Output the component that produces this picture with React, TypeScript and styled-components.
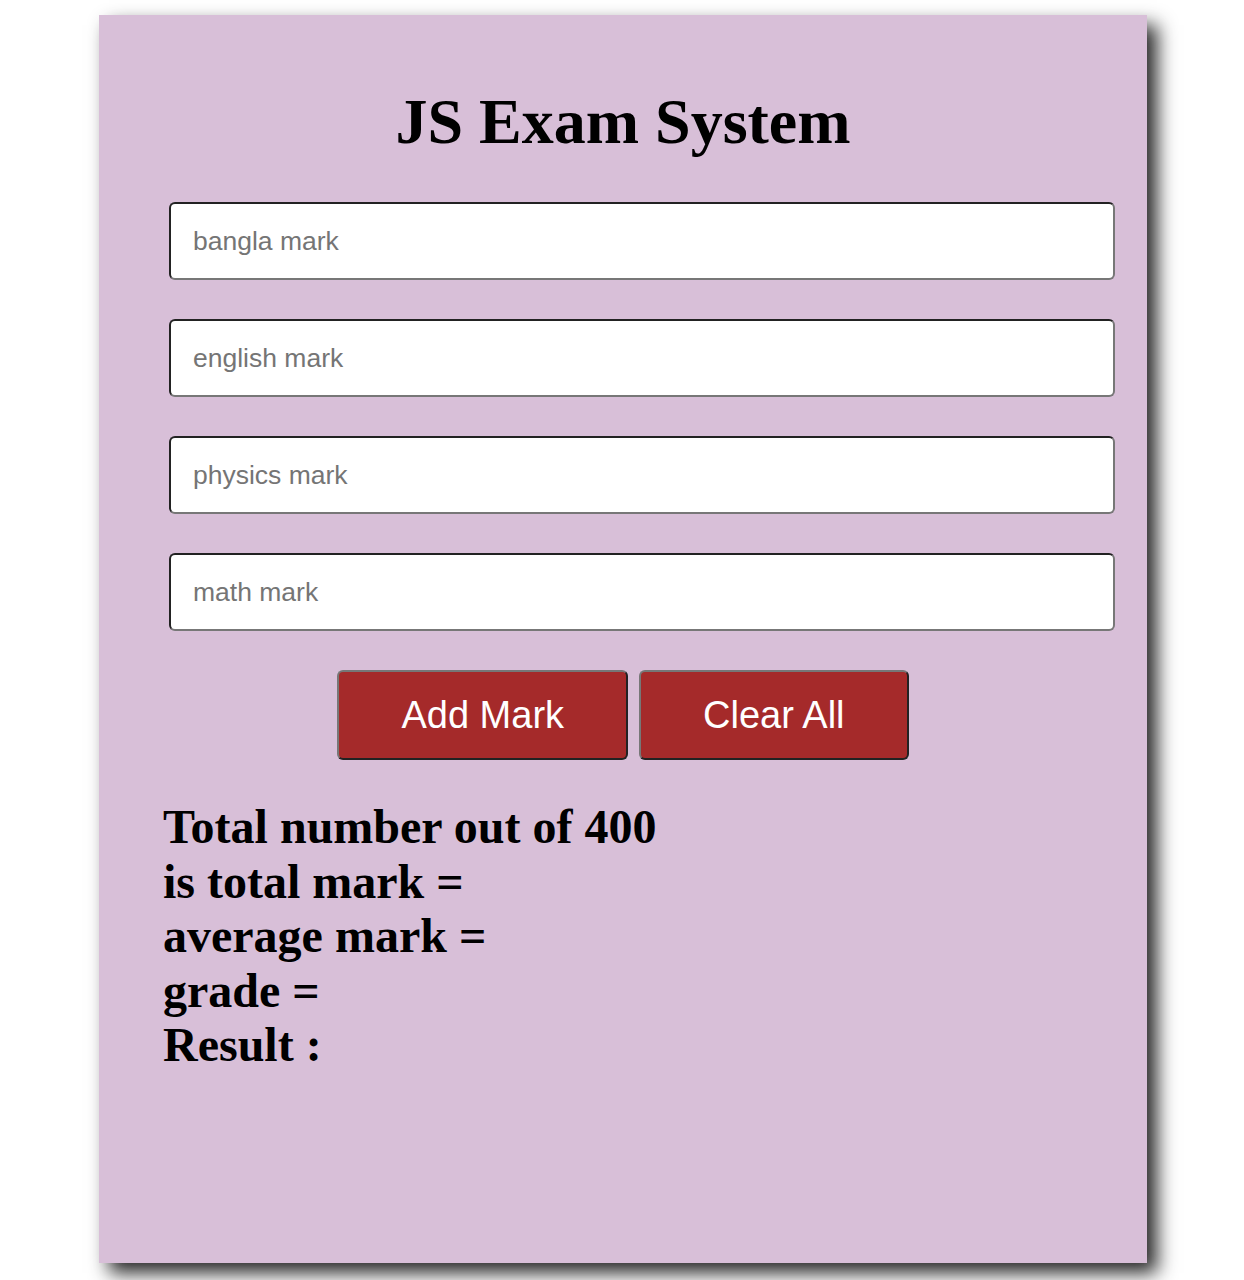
import React from 'react'
import styled, { createGlobalStyle } from 'styled-components'

const GlobalStyle = createGlobalStyle`
  body {
    margin: 0;
    background: #ffffff;
    font-family: "Liberation Serif", "Times New Roman", serif;
  }
`

const Card = styled.div`
  box-sizing: border-box;
  width: 1048px;
  height: 1248px;
  margin: 15px 0 17px 99px;
  background: #d8bfd8;
  box-shadow: 10px 10px 18px rgba(0, 0, 0, 0.85);
  display: flex;
  flex-direction: column;
`

const Title = styled.h1`
  margin: 71px 0 0;
  font-family: "Liberation Serif", "Times New Roman", serif;
  font-weight: bold;
  font-size: 64px;
  line-height: 71px;
  text-align: center;
  color: #000;
`

const Fields = styled.div`
  display: flex;
  flex-direction: column;
  gap: 39px;
  margin: 45px 0 0 70px;
  width: 946px;
`

const MarkInput = styled.input`
  box-sizing: border-box;
  width: 100%;
  height: 78px;
  padding: 0 22px;
  border: 2px solid;
  border-color: #222 #777 #777 #222;
  border-radius: 6px;
  background: #fff;
  font-family: "Liberation Sans", Arial, sans-serif;
  font-size: 26.5px;
  color: #000;
  outline: none;

  &::placeholder {
    color: #757575;
  }
`

const Actions = styled.div`
  display: flex;
  justify-content: center;
  gap: 11px;
  margin-top: 39px;
`

const ActionButton = styled.button`
  box-sizing: border-box;
  height: 90px;
  padding: 0 62px;
  border: 2px solid;
  border-color: #777 #222 #222 #777;
  border-radius: 6px;
  background: #a52a2a;
  color: #fff;
  font-family: "Liberation Sans", Arial, sans-serif;
  font-size: 38px;
  cursor: pointer;
`

const Results = styled.div`
  margin: 40px 0 0 64px;
  font-family: "Liberation Serif", "Times New Roman", serif;
  font-weight: bold;
  font-size: 48px;
  line-height: 54.5px;
  color: #000;
`

const ResultLine = styled.div``

const subjects = ['bangla mark', 'english mark', 'physics mark', 'math mark']

export default function App() {
  return (
    <>
      <GlobalStyle />
      <Card>
        <Title>JS Exam System</Title>
        <Fields>
          {subjects.map(s => (
            <MarkInput key={s} type="number" placeholder={s} />
          ))}
        </Fields>
        <Actions>
          <ActionButton>Add Mark</ActionButton>
          <ActionButton>Clear All</ActionButton>
        </Actions>
        <Results>
          <ResultLine>Total number out of 400</ResultLine>
          <ResultLine>is total mark =</ResultLine>
          <ResultLine>average mark =</ResultLine>
          <ResultLine>grade =</ResultLine>
          <ResultLine>Result :</ResultLine>
        </Results>
      </Card>
    </>
  )
}
